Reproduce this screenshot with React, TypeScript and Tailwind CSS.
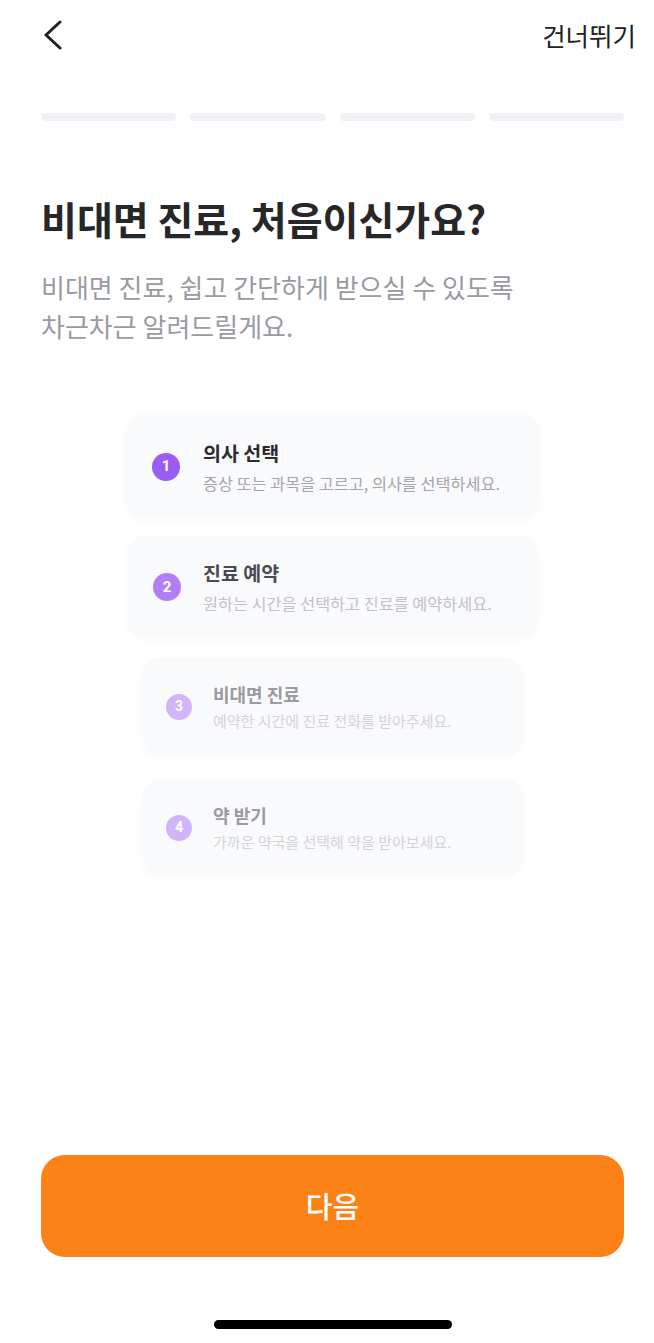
import React from 'react';

type Step = {
  num: number;
  title: string;
  desc: string;
  card: string;
  circle: string;
  titleCls: string;
  descCls: string;
};

const steps: Step[] = [
  {
    num: 1,
    title: '의사 선택',
    desc: '증상 또는 과목을 고르고, 의사를 선택하세요.',
    card: 'ml-[125px] w-[415px] h-[103px] pl-[27px] gap-[23px]',
    circle: 'w-[28px] h-[28px] bg-[#9b5cf4] text-[15px]',
    titleCls: 'text-[19.5px] leading-[26px] text-[#2b2b30]',
    descCls: 'text-[16.3px] leading-[22px] text-[#a5a5ad] mt-[6px]',
  },
  {
    num: 2,
    title: '진료 예약',
    desc: '원하는 시간을 선택하고 진료를 예약하세요.',
    card: 'ml-[127px] mt-[18px] w-[411px] h-[102px] pl-[26px] gap-[22px]',
    circle: 'w-[28px] h-[28px] bg-[#b27ef6] text-[15px]',
    titleCls: 'text-[19.5px] leading-[26px] text-[#4a4a50]',
    descCls: 'text-[16.3px] leading-[22px] text-[#c2c2c8] mt-[6px]',
  },
  {
    num: 3,
    title: '비대면 진료',
    desc: '예약한 시간에 진료 전화를 받아주세요.',
    card: 'ml-[142px] mt-[20px] w-[381px] h-[97px] pl-[24px] gap-[21px]',
    circle: 'w-[26px] h-[26px] bg-[#d2b4fb] text-[14px]',
    titleCls: 'text-[18px] leading-[24px] text-[#9a9aa0]',
    descCls: 'text-[15px] leading-[20px] text-[#d4d4d8] mt-[5px]',
  },
  {
    num: 4,
    title: '약 받기',
    desc: '가까운 약국을 선택해 약을 받아보세요.',
    card: 'ml-[142px] mt-[25px] w-[381px] h-[95px] pl-[24px] gap-[21px]',
    circle: 'w-[26px] h-[26px] bg-[#d2b4fb] text-[14px]',
    titleCls: 'text-[18px] leading-[24px] text-[#9a9aa0]',
    descCls: 'text-[15px] leading-[20px] text-[#d4d4d8] mt-[5px]',
  },
];

export default function App() {
  return (
    <div
      className="w-[654px] h-[1343px] bg-white flex flex-col"
      style={{ fontFamily: '"Noto Sans CJK KR", "Noto Sans", sans-serif' }}
    >
      {/* Header */}
      <div className="h-[70px] flex items-center justify-between pl-[42px] pr-[18px]">
        <svg width="22" height="30" viewBox="0 0 22 30" fill="none">
          <polyline
            points="18,2 4,15 18,28"
            stroke="#1f1f22"
            strokeWidth="3"
            strokeLinecap="round"
            strokeLinejoin="round"
          />
        </svg>
        <span className="text-[25.5px] leading-[34px] text-[#222225]">건너뛰기</span>
      </div>

      {/* Progress */}
      <div className="mt-[43px] pl-[41px] pr-[30px] flex gap-[14px]">
        {[0, 1, 2, 3].map((i) => (
          <div key={i} className="flex-1 h-[8px] rounded-full bg-[#f0f0f5]" />
        ))}
      </div>

      {/* Title */}
      <h1 className="mt-[72px] pl-[41px] text-[39px] leading-[50px] font-bold text-[#27272a]">
        비대면 진료, 처음이신가요?
      </h1>
      <p className="mt-[24px] pl-[41px] text-[26px] leading-[39px] text-[#9a9ba2]">
        비대면 진료, 쉽고 간단하게 받으실 수 있도록
        <br />
        차근차근 알려드릴게요.
      </p>

      {/* Steps */}
      <div className="mt-[70px] flex flex-col">
        {steps.map((s) => (
          <div
            key={s.num}
            className={`${s.card} flex items-center rounded-[18px] bg-[#f9fafb] shadow-[0_2px_10px_rgba(0,0,0,0.025)]`}
          >
            <div
              className={`${s.circle} shrink-0 rounded-full flex items-center justify-center text-white font-bold`}
              style={{ fontFamily: 'Roboto, "Noto Sans", sans-serif' }}
            >
              {s.num}
            </div>
            <div className="flex flex-col">
              <div className={`${s.titleCls} font-bold`}>{s.title}</div>
              <div className={s.descCls}>{s.desc}</div>
            </div>
          </div>
        ))}
      </div>

      <div className="flex-1" />

      {/* Button */}
      <div className="pl-[41px] pr-[30px]">
        <button className="w-full h-[102px] rounded-[24px] bg-[#fc8217] text-white text-[29px] font-medium">
          다음
        </button>
      </div>

      {/* Home indicator */}
      <div className="mt-[63px] mb-[14px] pl-[12px] flex justify-center">
        <div className="w-[238px] h-[9px] rounded-full bg-black" />
      </div>
    </div>
  );
}
